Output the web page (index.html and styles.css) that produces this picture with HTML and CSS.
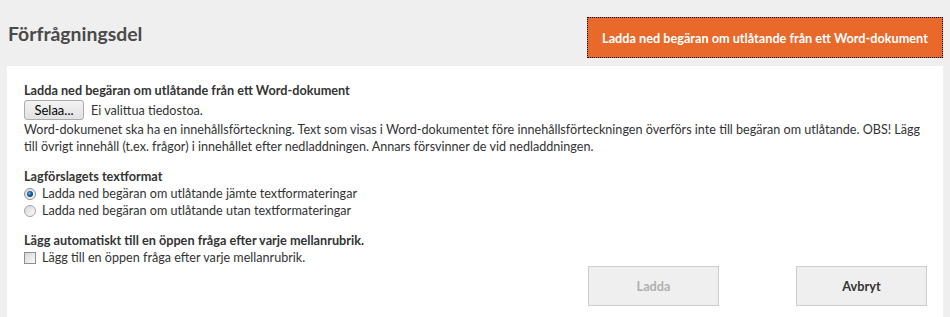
FILE: index.html
```html
<!DOCTYPE html>
<html lang="sv">
<head>
<meta charset="utf-8">
<title>Förfrågningsdel</title>
<link rel="stylesheet" href="styles.css">
</head>
<body>
<header class="topbar">
  <h1 class="title">Förfrågningsdel</h1>
  <button class="btn-orange" type="button">Ladda ned begäran om utlåtande från ett Word-dokument</button>
</header>
<main class="panel">
  <div class="field">
    <div class="label">Ladda ned begäran om utlåtande från ett Word-dokument</div>
    <div class="file-row">
      <span class="file-btn">Selaa...</span>
      <span class="file-none">Ei valittua tiedostoa.</span>
    </div>
    <p class="help">Word-dokumenet ska ha en innehållsförteckning. Text som visas i Word-dokumentet före innehållsförteckningen överförs inte till begäran om utlåtande. OBS! Lägg till övrigt innehåll (t.ex. frågor) i innehållet efter nedladdningen. Annars försvinner de vid nedladdningen.</p>
  </div>
  <div class="field">
    <div class="label">Lagförslagets textformat</div>
    <div class="option">
      <svg class="radio" width="12" height="12" viewBox="0 0 12 12">
        <defs>
          <linearGradient id="rg" x1="0" y1="0" x2="1" y2="1"><stop offset="0" stop-color="#d8d8d8"/><stop offset="1" stop-color="#fbfbfb"/></linearGradient>
          <radialGradient id="dot" cx="0.4" cy="0.4" r="0.6"><stop offset="0" stop-color="#6fb2e8"/><stop offset="0.6" stop-color="#1d5d9b"/><stop offset="1" stop-color="#16406b"/></radialGradient>
        </defs>
        <circle cx="6" cy="6" r="5.5" fill="url(#rg)" stroke="#8e8f8f"/>
        <circle cx="6" cy="6" r="3" fill="url(#dot)"/>
      </svg>
      <span>Ladda ned begäran om utlåtande jämte textformateringar</span>
    </div>
    <div class="option">
      <svg class="radio" width="12" height="12" viewBox="0 0 12 12">
        <circle cx="6" cy="6" r="5.5" fill="url(#rg)" stroke="#a3a3a3"/>
      </svg>
      <span>Ladda ned begäran om utlåtande utan textformateringar</span>
    </div>
  </div>
  <div class="field">
    <div class="label">Lägg automatiskt till en öppen fråga efter varje mellanrubrik.</div>
    <div class="option">
      <span class="checkbox"></span>
      <span>Lägg till en öppen fråga efter varje mellanrubrik.</span>
    </div>
  </div>
  <div class="actions">
    <button class="btn-grey disabled" type="button">Ladda</button>
    <button class="btn-grey" type="button">Avbryt</button>
  </div>
</main>
</body>
</html>
```
FILE: styles.css
```css
html, body {
  margin: 0;
  padding: 0;
}
body {
  background: #efefef;
  font-family: "Lato", "Liberation Sans", sans-serif;
  font-size: 12.6px;
  color: #333;
  width: 950px;
  height: 317px;
  overflow: hidden;
}
.topbar {
  display: flex;
  justify-content: space-between;
  align-items: flex-start;
  padding: 17px 7px 8px 8px;
}
.title {
  margin: 5px 0 0 0;
  font-size: 19.4px;
  font-weight: 700;
  color: #4a4a4a;
  line-height: 24px;
}
.btn-orange {
  width: 356px;
  height: 41px;
  background: #e8692a;
  color: #fff;
  border: 0;
  outline: 1px dotted #000;
  outline-offset: -1px;
  font-family: inherit;
  font-size: 12.7px;
  font-weight: 700;
  padding: 0;
}
.panel {
  box-sizing: border-box;
  margin: 0 7px;
  background: #fff;
  padding: 16px 16px 0 17px;
  height: 251px;
}
.field + .field {
  margin-top: 13px;
}
.label {
  font-weight: 700;
  font-size: 12.7px;
  line-height: 17px;
  color: #333;
}
.file-row {
  display: flex;
  align-items: center;
  gap: 7px;
  height: 22px;
}
.file-btn {
  display: inline-block;
  box-sizing: border-box;
  height: 20px;
  width: 60px;
  text-align: center;
  line-height: 18px;
  border: 1px solid #acacac;
  border-radius: 3px;
  background: linear-gradient(#f2f2f2, #e2e2e2);
  color: #000;
  font-size: 13px;
}
.file-none {
  color: #333;
}
.help {
  margin: 0;
  line-height: 17px;
}
.option {
  display: flex;
  align-items: center;
  line-height: 17px;
  gap: 6px;
}
.radio {
  flex: none;
}
.checkbox {
  flex: none;
  box-sizing: border-box;
  width: 12px;
  height: 12px;
  border: 1px solid #8f8f8f;
  background: linear-gradient(135deg, #d6d6d6, #fafafa);
}
.actions {
  display: flex;
  justify-content: flex-end;
  gap: 77px;
  margin-top: 0;
}
.btn-grey {
  width: 131px;
  height: 40px;
  background: #efefef;
  border: 1px solid #cdcdcd;
  font-family: inherit;
  font-size: 12.7px;
  font-weight: 700;
  color: #333;
}
.btn-grey.disabled {
  color: #b0b0b0;
}
```
